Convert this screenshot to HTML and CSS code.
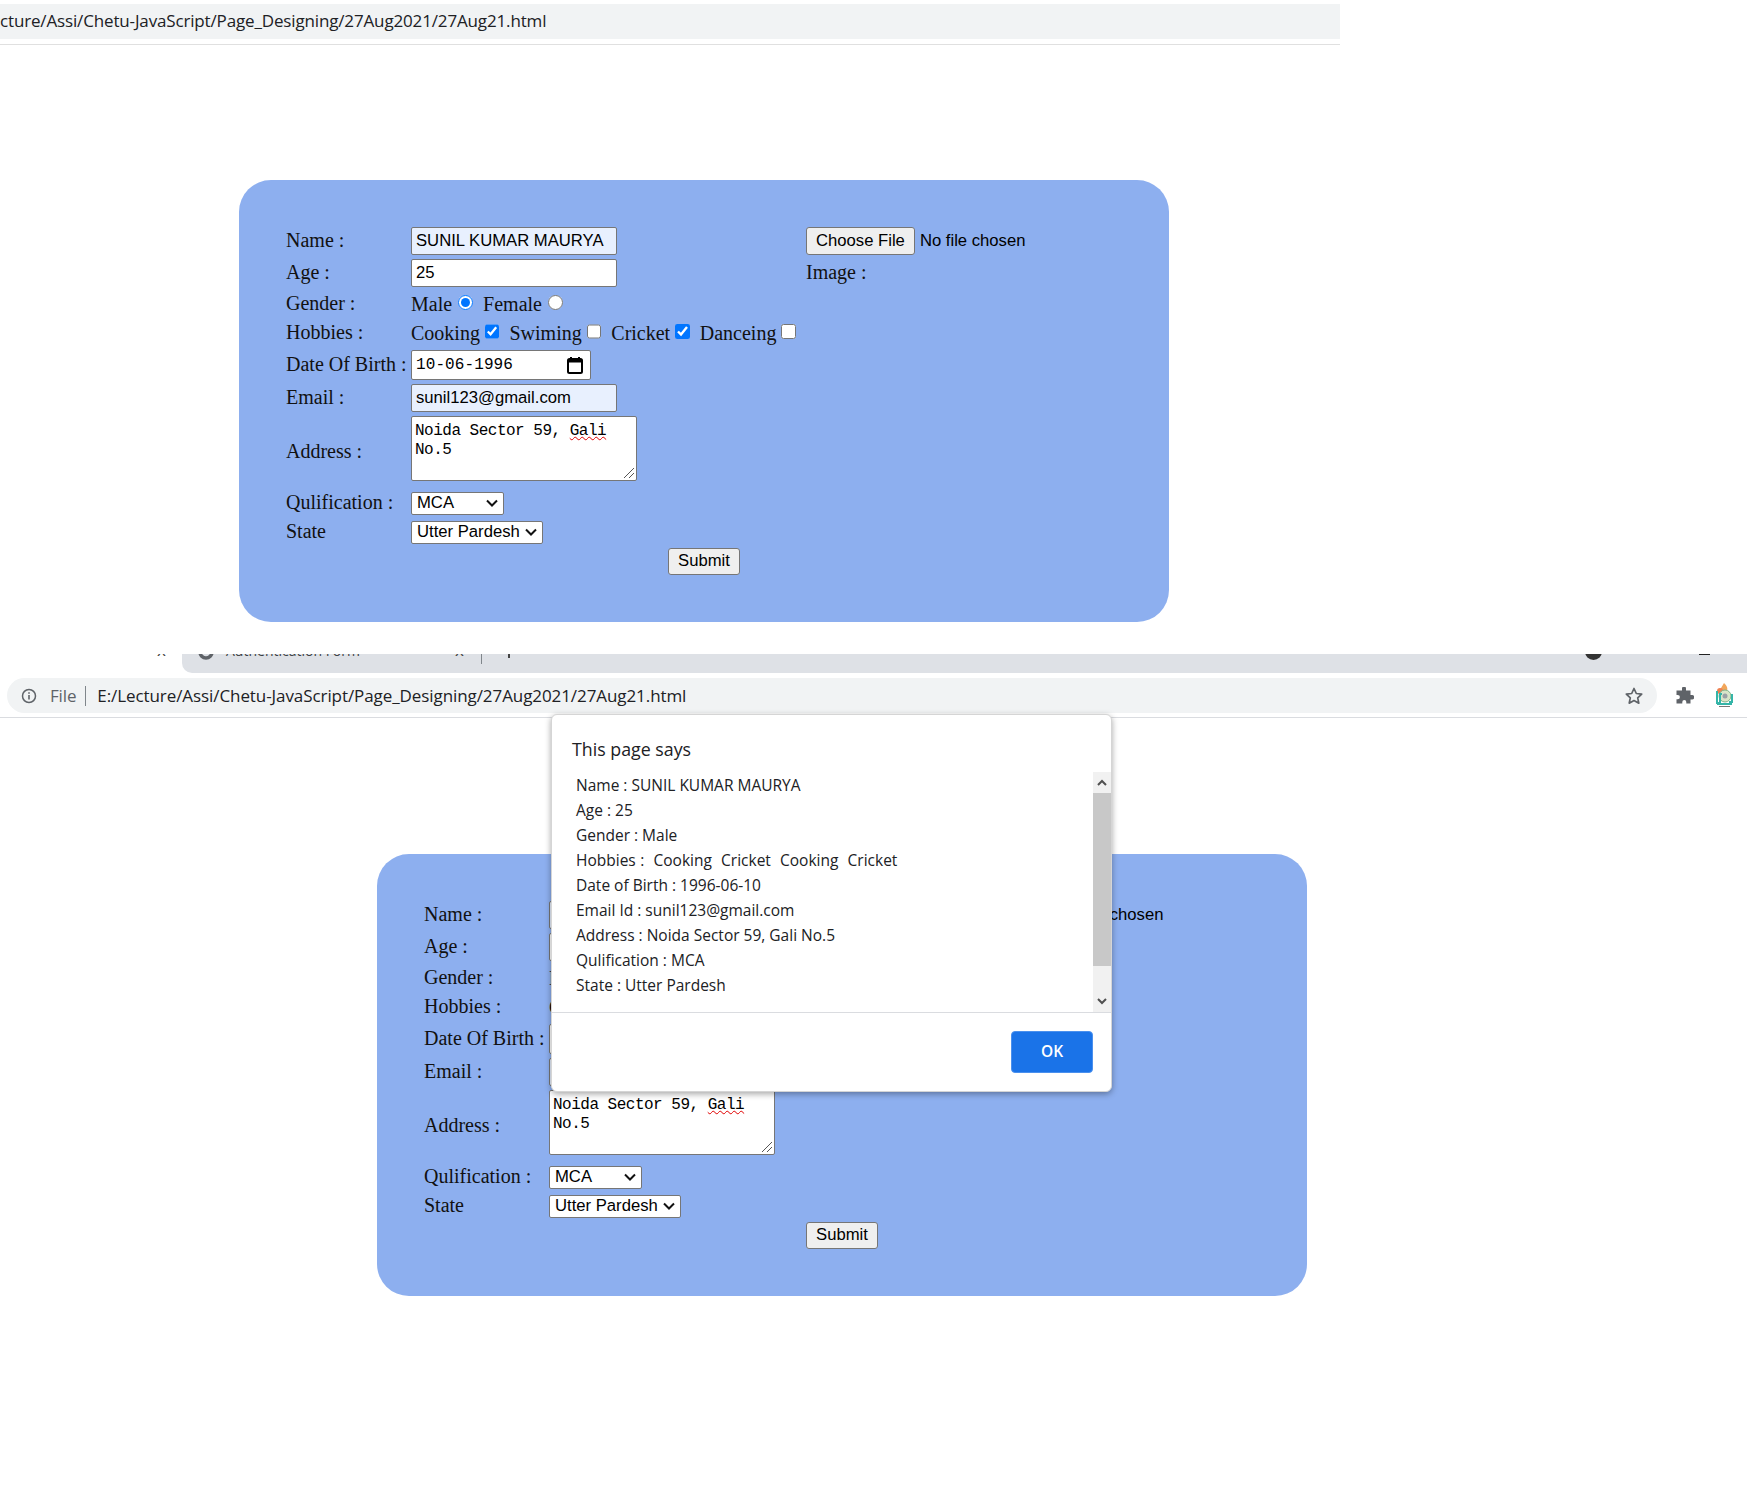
FILE: index.html
```html
<!DOCTYPE html>
<html lang="en">
<head>
    <meta charset="UTF-8">
    <title>Authentication Form</title>
    <link rel="stylesheet" href="styles.css">
</head>
<body>
    <div class="top-shot">
        <div class="top-url">cture/Assi/Chetu-JavaScript/Page_Designing/27Aug2021/27Aug21.html</div>
    </div>

    <form class="card card-first">
        <div class="row">
            <label class="lbl">Name :</label>
            <div class="val"><input class="txt filled" type="text" value="SUNIL KUMAR MAURYA"></div>
            <div class="file-box"><button class="btn" type="button">Choose File</button><span class="no-file">No file chosen</span></div>
        </div>
        <div class="row">
            <label class="lbl">Age :</label>
            <div class="val"><input class="txt" type="text" value="25"></div>
            <div class="image-lbl">Image :</div>
        </div>
        <div class="row row-choice">
            <label class="lbl">Gender :</label>
            <div class="val choices">
                <span>Male</span><input class="radio" type="radio" name="g1" checked>
                <span>Female</span><input class="radio" type="radio" name="g1">
            </div>
        </div>
        <div class="row row-choice row-hobby">
            <label class="lbl">Hobbies :</label>
            <div class="val choices">
                <span>Cooking</span><input class="check" type="checkbox" checked>
                <span>Swiming</span><input class="check" type="checkbox">
                <span>Cricket</span><input class="check" type="checkbox" checked>
                <span>Danceing</span><input class="check" type="checkbox">
            </div>
        </div>
        <div class="row row-date">
            <label class="lbl">Date Of Birth :</label>
            <div class="val">
                <div class="date-box"><span>10-06-1996</span>
                    <svg width="18" height="18" viewBox="0 0 18 18"><path d="M5 1v3M13 1v3" stroke="#000" stroke-width="2"/><rect x="2" y="3" width="14" height="14" rx="1.5" fill="none" stroke="#000" stroke-width="2"/><rect x="2" y="3" width="14" height="3.5" fill="#000"/></svg>
                </div>
            </div>
        </div>
        <div class="row">
            <label class="lbl">Email :</label>
            <div class="val"><input class="txt filled" type="text" value="sunil123@gmail.com"></div>
        </div>
        <div class="row row-address">
            <label class="lbl lbl-address">Address :</label>
            <div class="val">
                <div class="area">Noida Sector 59, <span class="typo">Gali</span><br>No.5
                    <svg class="grip" width="12" height="12" viewBox="0 0 12 12"><path d="M1 11L11 1M6 11l5-5" stroke="#555" stroke-width="1"/></svg>
                </div>
            </div>
        </div>
        <div class="row row-select row-qual">
            <label class="lbl">Qulification :</label>
            <div class="val"><select class="sel sel-qual"><option>MCA</option></select></div>
        </div>
        <div class="row row-select row-state">
            <label class="lbl">State</label>
            <div class="val"><select class="sel sel-state"><option>Utter Pardesh</option></select></div>
        </div>
        <div class="row-submit"><button class="btn btn-submit" type="button">Submit</button></div>
    </form>

    <div class="tab-row">
        <span class="tab-close tab-close-left">x</span>
        <div class="tab-strip">
            <svg class="tab-icon" width="16" height="16" viewBox="0 0 16 16"><circle cx="8" cy="8" r="6" fill="none" stroke="#5f6368" stroke-width="3.5"/></svg>
            <span class="tab-title">Authentication Form</span>
            <span class="tab-close tab-close-right">x</span>
            <span class="tab-sep"></span>
            <span class="tab-plus"></span>
            <span class="tab-dot"></span>
            <span class="tab-dash"></span>
        </div>
    </div>
    <div class="url-row">
        <div class="url-bar">
            <svg class="info" width="16" height="16" viewBox="0 0 16 16"><circle cx="8" cy="8" r="6.5" fill="none" stroke="#5f6368" stroke-width="1.5"/><path d="M8 7v4.5M8 4.2v1.6" stroke="#5f6368" stroke-width="1.6"/></svg>
            <span class="url-file">File</span>
            <span class="url-sep"></span>
            <span class="url-text">E:/Lecture/Assi/Chetu-JavaScript/Page_Designing/27Aug2021/27Aug21.html</span>
            <svg class="star" width="20" height="20" viewBox="0 0 20 20"><path d="M10 2.5l2.3 5 5.4.6-4 3.7 1.1 5.4-4.8-2.7-4.8 2.7 1.1-5.4-4-3.7 5.4-.6z" fill="none" stroke="#5f6368" stroke-width="1.7" stroke-linejoin="round"/></svg>
        </div>
        <svg class="puzzle" width="18" height="18" viewBox="0 0 18 18"><path d="M6 1.5a2 2 0 0 1 4 0V3.5h4.5V8h1.6a2.2 2.2 0 0 1 0 4.4h-1.6V16.5h-4.2v-1.4a2 2 0 0 0-4 0v1.4H.5v-4.2h1.2a2.2 2.2 0 0 0 0-4.4H.5V3.5H6z" fill="#5f6368"/></svg>
        <svg class="avatar" width="18" height="25" viewBox="0 0 18 25">
            <path d="M9 0c3 3 4 5 3 8H6c-1-3 1-4 3-8z" fill="#f2a65a"/>
            <circle cx="5" cy="8" r="3" fill="#ee7f4f"/>
            <circle cx="10" cy="13" r="6" fill="#d9e4c8" stroke="#7fb58a"/>
            <circle cx="10" cy="13" r="2.5" fill="#9aa0a6"/>
            <path d="M2 8v12h3V11h2M14 19h3v-8" fill="none" stroke="#35b5a8" stroke-width="2"/>
            <path d="M2 20h15v2H2z" fill="#35b5a8"/>
            <path d="M4 23.5h11" stroke="#777" stroke-width="1"/>
        </svg>
    </div>

    <form class="card card-second">
        <div class="row">
            <label class="lbl">Name :</label>
            <div class="val"><input class="txt filled" type="text" value="SUNIL KUMAR MAURYA"></div>
            <div class="file-box"><button class="btn" type="button">Choose File</button><span class="no-file">No file chosen</span></div>
        </div>
        <div class="row">
            <label class="lbl">Age :</label>
            <div class="val"><input class="txt" type="text" value="25"></div>
            <div class="image-lbl">Image :</div>
        </div>
        <div class="row row-choice">
            <label class="lbl">Gender :</label>
            <div class="val choices">
                <span>Male</span><input class="radio" type="radio" name="g2" checked>
                <span>Female</span><input class="radio" type="radio" name="g2">
            </div>
        </div>
        <div class="row row-choice row-hobby">
            <label class="lbl">Hobbies :</label>
            <div class="val choices">
                <span>Cooking</span><input class="check" type="checkbox" checked>
                <span>Swiming</span><input class="check" type="checkbox">
                <span>Cricket</span><input class="check" type="checkbox" checked>
                <span>Danceing</span><input class="check" type="checkbox">
            </div>
        </div>
        <div class="row row-date">
            <label class="lbl">Date Of Birth :</label>
            <div class="val">
                <div class="date-box"><span>10-06-1996</span></div>
            </div>
        </div>
        <div class="row">
            <label class="lbl">Email :</label>
            <div class="val"><input class="txt filled" type="text" value="sunil123@gmail.com"></div>
        </div>
        <div class="row row-address">
            <label class="lbl lbl-address">Address :</label>
            <div class="val">
                <div class="area">Noida Sector 59, <span class="typo">Gali</span><br>No.5
                    <svg class="grip" width="12" height="12" viewBox="0 0 12 12"><path d="M1 11L11 1M6 11l5-5" stroke="#555" stroke-width="1"/></svg>
                </div>
            </div>
        </div>
        <div class="row row-select row-qual">
            <label class="lbl">Qulification :</label>
            <div class="val"><select class="sel sel-qual"><option>MCA</option></select></div>
        </div>
        <div class="row row-select row-state">
            <label class="lbl">State</label>
            <div class="val"><select class="sel sel-state"><option>Utter Pardesh</option></select></div>
        </div>
        <div class="row-submit"><button class="btn btn-submit" type="button">Submit</button></div>
    </form>

    <div class="dialog">
        <div class="dialog-title">This page says</div>
        <div class="dialog-body">
            <div class="dialog-msg">
                <div>Name : SUNIL KUMAR MAURYA</div>
                <div>Age : 25</div>
                <div>Gender : Male</div>
                <div class="msg-hobbies">Hobbies :&nbsp; Cooking&nbsp; Cricket&nbsp; Cooking&nbsp; Cricket</div>
                <div>Date of Birth : 1996-06-10</div>
                <div>Email Id : sunil123@gmail.com</div>
                <div>Address : Noida Sector 59, Gali No.5</div>
                <div>Qulification : MCA</div>
                <div>State : Utter Pardesh</div>
            </div>
            <div class="scroll">
                <svg width="18" height="21" viewBox="0 0 18 21"><path d="M5 13l4-4 4 4" fill="none" stroke="#505050" stroke-width="2"/></svg>
                <div class="thumb"></div>
                <svg class="scroll-down" width="18" height="21" viewBox="0 0 18 21"><path d="M5 8l4 4 4-4" fill="none" stroke="#505050" stroke-width="2"/></svg>
            </div>
        </div>
        <div class="dialog-foot"><button class="ok" type="button">OK</button></div>
    </div>
</body>
</html>
```

FILE: styles.css
```css
html, body {
    margin: 0;
    padding: 0;
    background-color: #fff;
}
body {
    position: relative;
    height: 1507px;
    overflow: hidden;
    font-family: "Liberation Serif", serif;
    color: #111;
}

/* cropped address bar at the very top */
.top-shot {
    width: 1340px;
    height: 40px;
    padding-top: 4px;
    border-bottom: 1px solid #e0e0e0;
}
.top-url {
    height: 35px;
    line-height: 33px;
    background-color: #f1f3f4;
    font-family: "Open Sans", sans-serif;
    font-size: 17px;
    letter-spacing: -0.15px;
    color: #202124;
}

.card {
    box-sizing: border-box;
    width: 930px;
    height: 442px;
    padding: 47px 0 0 47px;
    background-color: #8dafef;
    border-radius: 32px;
    display: flex;
    flex-direction: column;
    gap: 4px;
}
.card-first {
    margin: 135px 0 0 239px;
}
.card-second {
    margin: 136px 0 0 377px;
}

.row {
    display: grid;
    grid-template-columns: 125px 395px auto;
    align-items: center;
    height: 28px;
}
.row-choice {
    height: 26px;
}
.row-hobby {
    margin-top: -1px;
}
.row-date {
    height: 30px;
}
.row-address {
    height: 65px;
}
.row-select {
    height: 23px;
}
.row-qual {
    margin-top: 6px;
}
.row-state {
    margin-top: 2px;
}
.lbl, .image-lbl, .choices {
    font-size: 20px;
}
.lbl, .image-lbl {
    padding-bottom: 2px;
}
.lbl-address {
    padding: 5px 0 0;
}
.txt {
    box-sizing: border-box;
    width: 206px;
    height: 28px;
    padding: 0 4px;
    border: 1px solid #767676;
    border-radius: 2px;
    background-color: #fff;
    font-family: "Liberation Sans", sans-serif;
    font-size: 16.67px;
    color: #000;
}
.filled {
    background-color: #e8f0fe;
}
.choices {
    display: flex;
    align-items: center;
    white-space: nowrap;
}
.radio, .check {
    width: 15px;
    height: 15px;
    margin: 0 10px 4px 5px;
}
.radio {
    margin-left: 6px;
}
.file-box {
    display: flex;
    align-items: center;
    font-family: "Liberation Sans", sans-serif;
    font-size: 16.67px;
}
.no-file {
    margin-left: 5px;
    color: #000;
}
.btn {
    box-sizing: border-box;
    height: 28px;
    padding: 0 9px;
    border: 1px solid #767676;
    border-radius: 3px;
    background-color: #efefef;
    font-family: "Liberation Sans", sans-serif;
    font-size: 16.67px;
    color: #000;
}
.date-box {
    box-sizing: border-box;
    width: 180px;
    height: 30px;
    padding: 0 6px 0 4px;
    display: flex;
    align-items: center;
    justify-content: space-between;
    background-color: #fff;
    border: 1px solid #767676;
    border-radius: 2px;
    font-family: "Liberation Mono", monospace;
    font-size: 16px;
    letter-spacing: 0.1px;
    color: #000;
}
.area {
    position: relative;
    box-sizing: border-box;
    width: 226px;
    height: 65px;
    padding: 5px 0 0 3px;
    background-color: #fff;
    border: 1px solid #767676;
    border-radius: 2px;
    font-family: "Liberation Mono", monospace;
    font-size: 16px;
    letter-spacing: -0.5px;
    line-height: 19px;
    color: #000;
}
.typo {
    text-decoration: underline wavy #e00000 1px;
}
.grip {
    position: absolute;
    right: 1px;
    bottom: 1px;
}
.sel {
    appearance: none;
    box-sizing: border-box;
    height: 23px;
    padding: 0 0 2px 5px;
    border: 1px solid #767676;
    border-radius: 2px;
    background: #fff url("data:image/svg+xml,%3Csvg xmlns='http://www.w3.org/2000/svg' width='12' height='8'%3E%3Cpath d='M1 1.5l5 5 5-5' fill='none' stroke='%23111' stroke-width='2'/%3E%3C/svg%3E") no-repeat;
    background-position: right 5px top 6px;
    font-family: "Liberation Sans", sans-serif;
    font-size: 16.67px;
    color: #000;
}
.sel-qual {
    width: 93px;
}
.sel-state {
    width: 132px;
}
.row-submit {
    display: flex;
    justify-content: center;
    margin: 1px 0 0 -47px;
}
.btn-submit {
    width: 72px;
    height: 27px;
    padding: 0 0 2px;
}

/* second browser chrome */
.tab-row {
    display: flex;
    height: 19px;
    margin-top: 32px;
    overflow: hidden;
    width: 1747px;
}
.tab-close {
    font-family: "Open Sans", sans-serif;
    font-size: 17px;
    line-height: 17px;
    color: #444;
    margin-top: -13px;
}
.tab-close-left {
    width: 182px;
    box-sizing: border-box;
    padding-left: 157px;
}
.tab-strip {
    flex: 1;
    display: flex;
    align-items: flex-start;
    background-color: #dee1e6;
    border-bottom-left-radius: 10px;
    overflow: hidden;
}
.tab-icon {
    margin: -10px 0 0 16px;
}
.tab-title {
    margin: -14px 0 0 12px;
    width: 229px;
    font-family: "Open Sans", sans-serif;
    font-size: 14px;
    line-height: 21px;
    color: #3c4043;
}
.tab-close-right {
    width: 26px;
}
.tab-sep {
    width: 1px;
    height: 10px;
    background-color: #80868b;
}
.tab-plus {
    width: 2px;
    height: 4px;
    margin-left: 26px;
    background-color: #444;
}
.tab-dot {
    width: 17px;
    height: 17px;
    margin: -11px 0 0 1075px;
    border-radius: 50%;
    background-color: #333;
}
.tab-dash {
    width: 11px;
    height: 1px;
    margin-left: 97px;
    background-color: #222;
}
.url-row {
    display: flex;
    align-items: center;
    box-sizing: border-box;
    width: 1747px;
    height: 40px;
    margin-top: 5px;
    padding: 0 0 4px 7px;
    border-bottom: 1px solid #dadce0;
}
.url-bar {
    flex: 0 0 1650px;
    height: 35px;
    display: flex;
    align-items: center;
    border-radius: 18px;
    background-color: #f1f3f4;
    font-family: "Open Sans", sans-serif;
    font-size: 17px;
    letter-spacing: -0.15px;
}
.info {
    margin-left: 14px;
}
.url-file {
    margin-left: 13px;
    color: #5f6368;
}
.url-sep {
    width: 1px;
    height: 20px;
    margin: 0 11px 0 9px;
    background-color: #80868b;
}
.url-text {
    flex: 1;
    letter-spacing: -0.08px;
    color: #202124;
}
.star {
    margin-right: 13px;
}
.puzzle {
    margin-left: 19px;
}
.avatar {
    margin-left: 21px;
}

/* alert dialog, sits over the second form */
.dialog {
    position: absolute;
    left: 551px;
    top: 714px;
    box-sizing: border-box;
    width: 561px;
    height: 378px;
    background-color: #fff;
    border: 1px solid #d5d5d5;
    border-radius: 6px;
    box-shadow: 0 2px 6px rgba(0, 0, 0, 0.35);
    font-family: "Open Sans", sans-serif;
    color: #202124;
    overflow: hidden;
}
.dialog-title {
    height: 57px;
    padding: 21px 0 0 20px;
    box-sizing: border-box;
    font-size: 17.8px;
    line-height: 26px;
}
.dialog-body {
    display: flex;
    height: 240px;
    border-bottom: 1px solid #dadce0;
}
.dialog-msg {
    flex: 1;
    padding: 1px 0 0 24px;
    font-size: 15.5px;
    line-height: 25px;
}
.msg-hobbies {
    word-spacing: 0.55px;
}
.scroll {
    width: 18px;
    display: flex;
    flex-direction: column;
    background-color: #f1f1f1;
}
.thumb {
    height: 173px;
    background-color: #c8c8c8;
}
.scroll-down {
    margin-top: auto;
}
.dialog-foot {
    display: flex;
    justify-content: flex-end;
    padding: 18px 18px 0 0;
}
.ok {
    box-sizing: border-box;
    width: 82px;
    height: 42px;
    padding: 0 0 2px;
    border: 1px solid #4a90ee;
    border-radius: 4px;
    background-color: #1a73e8;
    color: #fff;
    font-family: "Open Sans", sans-serif;
    font-size: 15.5px;
    font-weight: 600;
}
```
